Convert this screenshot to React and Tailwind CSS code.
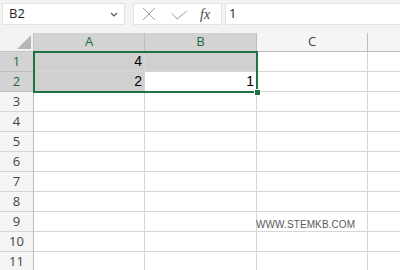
const cols = [
  { key: "A", w: "w-[111px]", sel: true },
  { key: "B", w: "w-[112px]", sel: true },
  { key: "C", w: "w-[111px]", sel: false },
  { key: "D", w: "flex-1", sel: false, blank: true },
];

const rows = [
  { n: 1, sel: true, cells: { A: "4", B: "" } },
  { n: 2, sel: true, cells: { A: "2", B: "1" } },
  { n: 3 }, { n: 4 }, { n: 5 }, { n: 6 }, { n: 7 }, { n: 8 }, { n: 9 }, { n: 10 }, { n: 11 },
];

function cellBg(row, col) {
  if (!row.sel || !col.sel) return "bg-white";
  if (row.n === 2 && col.key === "B") return "bg-white";
  return "bg-[#d0d0d0]";
}

export default function App() {
  return (
    <div className="relative w-[400px] h-[270px] overflow-hidden bg-white font-['Liberation_Sans',sans-serif]">
      {/* formula bar */}
      <div className="flex items-start h-[33px] bg-[#f3f3f3] pt-[3px] pl-[2px]">
        <div className="flex items-center justify-between w-[123px] h-[22px] bg-white border border-[#e3e3e3] pl-[6px] pr-[5px]">
          <span className="text-[13px] text-[#262626] font-['Open_Sans',sans-serif]">B2</span>
          <svg width="8" height="5" viewBox="0 0 8 5" className="mr-[1px]">
            <path d="M1 1l3 3 3-3" fill="none" stroke="#555" strokeWidth="1.2" />
          </svg>
        </div>
        <div className="flex items-center w-[89px] h-[22px] ml-[8px] bg-white border border-[#e3e3e3]">
          <svg width="14" height="14" viewBox="0 0 14 14" className="ml-[8px]">
            <path d="M1 1l12 12M13 1L1 13" fill="none" stroke="#a0a0a0" strokeWidth="1" />
          </svg>
          <svg width="17" height="10" viewBox="0 0 17 10" className="ml-[15px] mt-[2px]">
            <path d="M1 3.5l5 5.5L16 1" fill="none" stroke="#a0a0a0" strokeWidth="1" />
          </svg>
          <span className="ml-[12px] italic text-[14px] text-[#444] font-['Liberation_Serif',serif]">fx</span>
        </div>
        <div className="flex items-center flex-1 h-[22px] ml-[3px] bg-white border border-[#e3e3e3] border-r-0 pl-[3px]">
          <span className="text-[13px] text-[#222] font-['Open_Sans',sans-serif]">1</span>
        </div>
      </div>

      {/* column headers */}
      <div className="flex h-[19px] font-['Open_Sans',sans-serif] text-[13px]">
        <div className="relative w-[34px] bg-[#f3f3f3] border-r border-b border-[#c6c6c6]">
          <svg width="14" height="14" viewBox="0 0 14 14" className="absolute right-[2px] bottom-[2px]">
            <path d="M14 0L14 14L0 14Z" fill="#b7b7b7" />
          </svg>
        </div>
        {cols.map((c) => (
          <div
            key={c.key}
            className={`${c.w} flex items-center justify-center border-r border-b ${
              c.sel ? "bg-[#d3d3d3] text-[#1b6c40] border-[#bdbdbd]" : "bg-[#f5f5f5] text-[#444] border-[#bdbdbd]"
            } ${c.blank ? "border-r-0" : ""}`}
          >
            {c.blank ? "" : c.key}
          </div>
        ))}
      </div>

      {/* rows */}
      {rows.map((r) => (
        <div key={r.n} className="flex h-[20px]">
          <div
            className={`w-[34px] flex items-center justify-center border-r border-b font-['Open_Sans',sans-serif] text-[13px] ${
              r.sel ? "bg-[#d3d3d3] text-[#1b6c40] border-[#bdbdbd]" : "bg-[#f5f5f5] text-[#444] border-[#d6d6d6] border-r-[#bdbdbd]"
            }`}
          >
            {r.n}
          </div>
          {cols.map((c) => (
            <div
              key={c.key}
              className={`${c.w} flex items-center justify-end pr-[2px] border-r border-b border-[#d6d6d6] ${cellBg(r, c)} ${
                c.blank ? "border-r-0" : ""
              } text-[14px] text-black`}
            >
              {r.cells ? r.cells[c.key] : ""}
            </div>
          ))}
        </div>
      ))}

      {/* selection */}
      <div className="absolute left-[33px] top-[51px] w-[225px] h-[42px] border-2 border-[#1f7244] pointer-events-none" />
      <div className="absolute left-[254px] top-[89px] w-[7px] h-[7px] bg-[#1f7244] border border-white" />

      {/* watermark */}
      <div className="absolute left-[256px] top-[217px] text-[10px] text-[#5a5a5a] tracking-[0.1px]">WWW.STEMKB.COM</div>
    </div>
  );
}
